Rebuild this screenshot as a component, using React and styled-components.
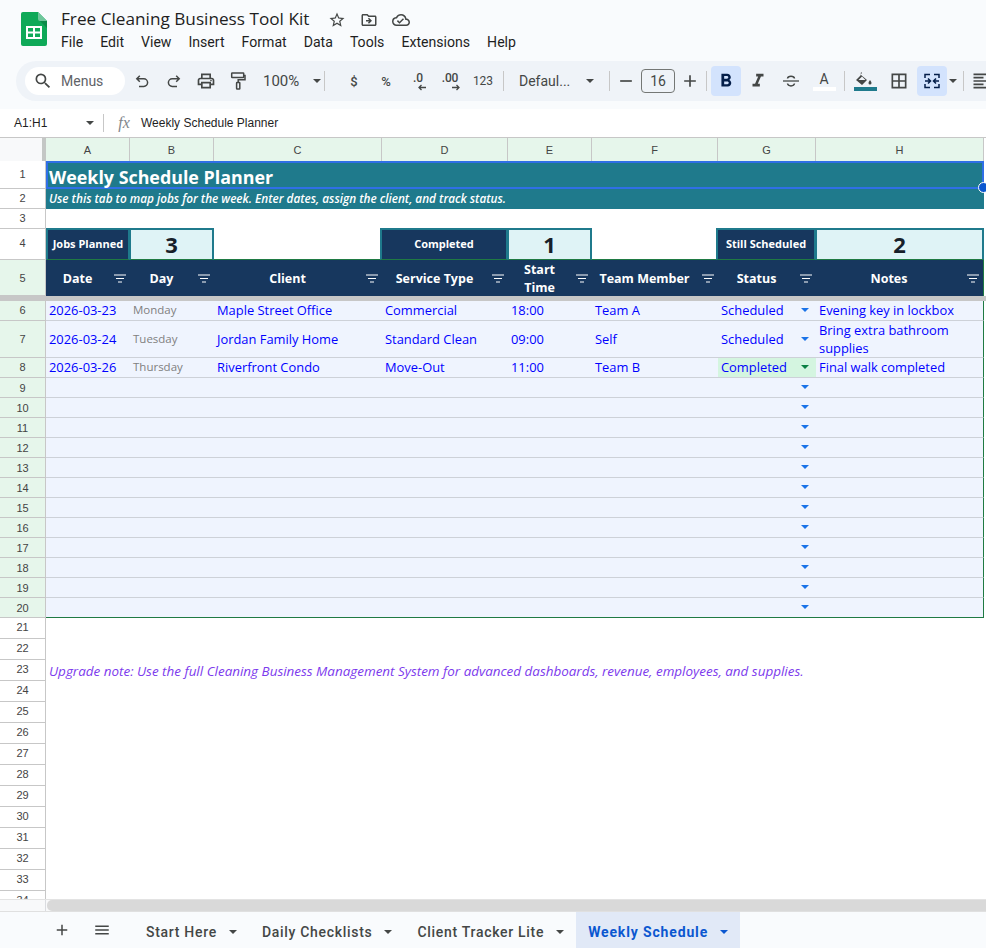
import React from "react";
import styled, { createGlobalStyle } from "styled-components";
import {
  MdStarBorder, MdOutlineDriveFileMove, MdOutlineCloudDone, MdSearch, MdOutlinePrint,
  MdAdd, MdRemove, MdFormatBold, MdFormatItalic, MdBorderAll,
  MdFormatAlignLeft, MdMenu,
} from "react-icons/md";

const Global = createGlobalStyle`
  html, body { margin: 0; padding: 0; background: #f9fbfd; }
  * { box-sizing: border-box; }
  body { font-family: Roboto, "Liberation Sans", sans-serif; color: #444746; }
`;

const Page = styled.div`
  width: 986px; height: 948px; display: flex; flex-direction: column; overflow: hidden; background: #f9fbfd;
`;
const TopBar = styled.header`
  height: 61px; display: flex; padding: 12px 0 0 21px; flex: none;
`;
const Logo = styled.svg`
  width: 26px; height: 34px; flex: none; margin-right: 14px;
`;
const TitleBlock = styled.div`display: flex; flex-direction: column;`;
const TitleRow = styled.div`display: flex; align-items: center; height: 15px;`;
const DocTitle = styled.div`
  font-family: "Open Sans", sans-serif; font-size: 17.2px; line-height: 14px; color: #1f1f1f; width: 260px; white-space: nowrap; padding-bottom: 2px; height: 16px;
`;
const TitleIcon = styled.span`
  width: 32px; display: flex; justify-content: center; color: #444746; font-size: 18px;
`;
const MenuBar = styled.nav`display: flex; margin-top: 7px;`;
const MenuItem = styled.span`
  font-size: 14.1px; line-height: 16px; color: #1f1f1f; margin-right: 17px;
`;
const Toolbar = styled.div`
  height: 40px; margin-left: 16px; border-radius: 20px 0 0 20px; background: #eff3f8; display: flex; align-items: center; flex: none; padding-left: 9px; width: 990px;
`;
const SearchPill = styled.div`
  width: 100px; height: 28px; margin-right: 1px; border-radius: 14px; background: #fff; display: flex; align-items: center; padding-left: 8px; gap: 8px; font-size: 14px; color: #5f6368; flex: none;
`;
const Tool = styled.div`
  width: ${p => p.$w || 32}px; height: 30px; flex: none; display: flex; align-items: center; justify-content: center; color: ${p => p.$on ? "#041e49" : "#444746"}; font-size: 20px; border-radius: 4px;
  background: ${p => p.$on ? "#d3e3fd" : "transparent"}; margin-left: ${p => p.$ml || 0}px;
`;
const Sep = styled.div`
  width: 1px; height: 20px; background: #c7c7c7; flex: none; margin-left: ${p => p.$ml || 0}px;
`;
const Drop = styled.i`
  display: block; width: 0; height: 0; flex: none; border-left: 4px solid transparent; border-right: 4px solid transparent; border-top: 4px solid ${p => p.$c || "#444746"};
`;
const StatusDrop = styled.span`margin-right: 4px; display: block;`;
const ZoomTool = styled.div`
  width: ${p => p.$w}px; height: 30px; flex: none; display: flex; align-items: center; justify-content: space-between; padding: 0 ${p => p.$pr}px 0 ${p => p.$pl}px; font-size: ${p => p.$fs || 14}px; color: #444746;
`;
const TextTool = styled(Tool)`font-size: ${p => p.$fs || 12}px; font-weight: ${p => p.$fw || 400}; font-family: Roboto, sans-serif;`;
const Deci = styled.span`position: relative; font-size: 12px; font-weight: 500; line-height: 12px; top: -3px; letter-spacing: -.2px;`;
const DeciArrow = styled.svg`position: absolute; right: -3px; top: 12px; width: 9px; height: 7px;`;
const SizeBox = styled.div`
  width: 34px; height: 24px; border: 1px solid #747775; border-radius: 4px; display: flex; align-items: center; justify-content: center; font-size: 14px; color: #444746; flex: none; margin: 0 -1px;
`;
const ColorTool = styled(Tool)`flex-direction: column; gap: 1px; font-size: 14px;`;
const Swatch = styled.span`display: block; width: 23px; height: 4px; background: ${p => p.$c}; flex: none;`;
const ColorA = styled.span`font-size: 14px; line-height: 14px;`;

const Formula = styled.div`
  height: 28px; margin-top: 8px; flex: none; background: #fff; display: flex; align-items: center; font-size: 12px; color: #1f1f1f; font-family: "Liberation Sans", sans-serif;
`;
const NameBox = styled.div`
  width: 103px; height: 100%; display: flex; align-items: center; justify-content: space-between; padding: 0 9px 0 14px; font-size: 12px; flex: none;
`;
const FxSep = styled.div`width: 1px; height: 18px; background: #c7c7c7; flex: none;`;
const Fx = styled.span`
  width: 37px; text-align: center; font-family: "Liberation Serif", serif; font-style: italic; font-size: 16px; color: #80868b; flex: none; padding-left: 3px;
`;

const Sheet = styled.div`flex: 1; min-height: 0; overflow: hidden; background: #fff; display: flex; flex-direction: column; position: relative;`;
const Row = styled.div`
  display: grid; grid-template-columns: 46px 84px 84px 168px 126px 84px 126px 98px 168px; grid-template-rows: minmax(0, 1fr); height: ${p => p.$h}px; flex: none;
`;
const ColHeadRow = styled(Row)`border-top: 1px solid #c7c7c7;`;
const Corner = styled.div`
  background: #f8f9fa; border-right: 4px solid #c4c7c5; width: 46px;
`;
const ColHead = styled.div`
  background: #e6f6eb; border-right: 1px solid #c7c7c7; display: flex; align-items: center; justify-content: center; font-size: 11px; color: #444; font-family: "Liberation Sans", sans-serif;
`;
const RowHead = styled.div`
  background: ${p => p.$sel ? "#e6f6eb" : "#fff"}; border-right: 1px solid #c7c7c7; border-bottom: 1px solid #c7c7c7; display: flex; align-items: center; justify-content: center; padding-bottom: ${p => p.$pb || 0}px; font-size: 11px; color: #444; font-family: "Liberation Sans", sans-serif; width: 46px; line-height: 12px;
`;
const Banner = styled.div`
  grid-column: span 8; background: #1f7a8c; color: #fff; display: flex; align-items: center; padding: ${p => p.$pt || 0}px 0 ${p => p.$pb || 0}px 3px; white-space: nowrap; font-family: "Open Sans", sans-serif; line-height: 18px;
  font-size: ${p => p.$fs}px; font-weight: ${p => p.$w || 400}; font-style: ${p => p.$i ? "italic" : "normal"}; position: relative;
  ${p => p.$selected && "border: 2px solid #2f6fe6; padding-left: 1px; z-index: 1;"}
`;
const Handle = styled.span`
  position: absolute; right: -7px; bottom: -6px; width: 11px; height: 11px; border-radius: 50%; background: #0b57d0; border: 1px solid #fff; z-index: 2;
`;
const Gap = styled.div`
  grid-column: span ${p => p.$n || 1}; background: #fff;
  ${p => p.$line && "border-bottom: 1px solid #1f7a43;"}
`;
const KpiLabel = styled.div`
  background: #17375e; color: #fff; border: 2px solid #1f7a8c; border-bottom: 1px solid #1f7a43; margin: -1px 0 0 ${p => p.$ml || 0}px; padding-bottom: 1px; display: flex; align-items: center; justify-content: center; font: 700 11px/16px "Open Sans", sans-serif; white-space: nowrap;
`;
const KpiValue = styled.div`
  background: #dff3f6; color: #17202a; border: 2px solid #1f7a8c; border-left-width: 1px; border-bottom: 1px solid #1f7a43; margin-top: -1px; padding-bottom: 1px; display: flex; align-items: center; justify-content: center; font: 700 22px/26px "Open Sans", sans-serif;
`;
const Head = styled.div`
  background: #17375e; color: #fff; display: flex; align-items: center; justify-content: center; text-align: center; position: relative; padding: 1px 21px 0 0; font: 700 12.5px/18px "Open Sans", sans-serif;
  ${p => p.$last && "border-right: 1px solid #1f7a43;"}
`;
const HeadLabel = styled.span`display: block; max-width: 60px; ${p => p.$wide && "max-width: none; white-space: nowrap;"}`;
const FilterIcon = styled.svg`
  position: absolute; right: 4px; top: 50%; margin-top: -4px; width: 12px; height: 9px;
`;
const Band = styled.div`height: 5px; background: #c7c7c7; flex: none; width: 986px;`;
const Cell = styled.div`
  background: ${p => p.$bg || "#eff4fe"}; border-bottom: 1px solid #cdd1d8; display: flex; align-items: center; justify-content: space-between; padding: 0 3px 1px; font: 400 ${p => p.$fs || 12.9}px/18px "Open Sans", sans-serif; color: ${p => p.$c || "#0000ff"}; overflow: hidden; white-space: ${p => p.$wrap ? "normal" : "nowrap"};
  ${p => p.$last && "border-right: 1px solid #1f7a43;"}
  ${p => p.$edge && "border-bottom: 1px solid #1f7a43;"}
`;
const Note = styled.div`
  grid-column: span 8; display: flex; align-items: center; padding: 1px 0 0 3px; font: italic 400 13.450px/18px "Open Sans", sans-serif; color: #7c3aed; white-space: nowrap; background: #fff;
`;
const ScrollRow = styled.div`
  height: 13px; flex: none; display: flex; background: #f8f9fa; border-top: 1px solid #e3e3e3; border-bottom: 1px solid #e0e0e0;
`;
const ScrollLeft = styled.div`width: 46px; border-right: 1px solid #dadce0; flex: none;`;
const Thumb = styled.div`flex: 1; margin-left: 1px; background: #d9d9d9; border-radius: 5px 0 0 5px;`;
const TabBar = styled.div`
  height: 36px; flex: none; display: flex; align-items: center; background: #f9fbfd; font: 500 14px Roboto, sans-serif;
`;
const TabIcon = styled.span`width: 40px; display: flex; justify-content: center; font-size: 18px; color: #444746; flex: none; margin-left: ${p => p.$ml || 0}px;`;
const Tab = styled.div`
  height: 100%; display: flex; align-items: center; gap: 12px; flex: none; margin-left: ${p => p.$ml || 0}px;
  padding: 3px 12px 0 ${p => p.$on ? 12 : 13}px;
  color: ${p => p.$on ? "#0b57d0" : "#444746"}; background: ${p => p.$on ? "#e1e9f7" : "transparent"};
  font-weight: ${p => p.$on ? 700 : 500}; letter-spacing: ${p => p.$on ? ".85px" : ".7px"};
`;

const D = ({ c }) => <Drop $c={c} />;
const Filter = () => (
  <FilterIcon viewBox="0 0 12 9"><path d="M0 1h12M2 4.500h8M4 8h4" stroke="#fff" strokeWidth="1" fill="none" /></FilterIcon>
);

const SheetsLogo = () => (
  <Logo viewBox="0 0 26 34">
    <path d="M2 0h15l9 9v23a2 2 0 0 1-2 2H2a2 2 0 0 1-2-2V2a2 2 0 0 1 2-2z" fill="#0fa958" />
    <path d="M17 7l9 9V9h-7z" fill="#0c8a48" />
    <path d="M17 0l9 9h-7a2 2 0 0 1-2-2z" fill="#6fc69b" />
    <path d="M6 14h16v13H6z M8 16v3.500h5V16z M15 16v3.500h5V16z M8 21.500V25h5v-3.500z M15 21.500V25h5v-3.500z" fill="#fff" fillRule="evenodd" transform="translate(-1 0)" />
  </Logo>
);

const UndoIcon = ({ flip }) => (
  <svg width="14" height="13" viewBox="0 0 14 13" style={flip ? { transform: "scaleX(-1)" } : undefined}>
    <path d="M4.800 .8 1.800 3.800l3 3M1.800 3.800h7a3.800 3.800 0 0 1 0 7.600H4" fill="none" stroke="#444746" strokeWidth="1.500" />
  </svg>
);
const RollerIcon = () => (
  <svg width="16" height="18" viewBox="0 0 16 18" fill="none" stroke="#444746" strokeWidth="1.500">
    <rect x="1.700" y="1" width="12" height="4.500" rx=".5" />
    <path d="M13.700 3.500h1.300v4.200H8.200v2.800" />
    <rect x="6.600" y="10.500" width="3.200" height="6.500" rx=".5" />
  </svg>
);
const StrikeIcon = () => (
  <svg width="18" height="18" viewBox="0 0 18 18">
    <path d="M1 9h16" stroke="#444746" strokeWidth="1.300" />
    <path d="M5.500 6.500C6 3.500 12 3.500 12.500 6.500M5.500 11.500C6 14.700 12 14.700 12.500 11.500" fill="none" stroke="#444746" strokeWidth="1.500" />
  </svg>
);
const FillIcon = () => (
  <svg width="18" height="14" viewBox="0 0 18 14">
    <path d="M6 0l1 1-1.500 1.500L12 8 7 13 1 8l4.500-4.500z M3.500 8h7L7 4.500z" fill="#444746" fillRule="evenodd" transform="translate(-1 0)" />
    <path d="M14 8c1 1.400 1.500 2.200 1.500 3a1.500 1.500 0 0 1-3 0c0-.8.500-1.600 1.500-3z" fill="#444746" />
  </svg>
);
const MergeIcon = () => (
  <svg width="16" height="16" viewBox="0 0 16 16" fill="none" stroke="#041e49" strokeWidth="1.500">
    <path d="M1 5V1.500h5M10 1.500h5V5M1 11v3.500h5M10 14.500h5V11" />
    <path d="M1 8h5.500M4 5.500 6.500 8 4 10.500M15 8H9.500M12 5.500 9.500 8l2.500 2.500" />
  </svg>
);

const columns = ["A", "B", "C", "D", "E", "F", "G", "H"];
const headers = ["Date", "Day", "Client", "Service Type", "Start Time", "Team Member", "Status", "Notes"];
const jobs = [
  { n: 6, h: 20, pb: 2, d: ["2026-03-23", "Monday", "Maple Street Office", "Commercial", "18:00", "Team A", "Scheduled", "Evening key in lockbox"] },
  { n: 7, h: 37, pb: 0, d: ["2026-03-24", "Tuesday", "Jordan Family Home", "Standard Clean", "09:00", "Self", "Scheduled", "Bring extra bathroom supplies"] },
  { n: 8, h: 20, pb: 2, d: ["2026-03-26", "Thursday", "Riverfront Condo", "Move-Out", "11:00", "Team B", "Completed", "Final walk completed"] },
];
const blanks = Array.from({ length: 12 }, (_, i) => i + 9);
const below = Array.from({ length: 14 }, (_, i) => i + 21);

function JobCell({ i, text, edge }) {
  if (i === 1) return <Cell $c="#7f7f7f" $fs={11.500} $edge={edge}>{text}</Cell>;
  if (i === 6) {
    const done = text === "Completed";
    return (
      <Cell $bg={done ? "#d4f5e0" : undefined} $edge={edge}>
        <span>{text}</span>
        <StatusDrop><D c={done ? "#0b8043" : "#1a73e8"} /></StatusDrop>
      </Cell>
    );
  }
  return <Cell $wrap={i === 7} $last={i === 7} $edge={edge}>{text}</Cell>;
}

export default function App() {
  return (
    <Page>
      <Global />
      <TopBar>
        <SheetsLogo />
        <TitleBlock>
          <TitleRow>
            <DocTitle>Free Cleaning Business Tool Kit</DocTitle>
            <TitleIcon><MdStarBorder /></TitleIcon>
            <TitleIcon><MdOutlineDriveFileMove /></TitleIcon>
            <TitleIcon><MdOutlineCloudDone /></TitleIcon>
          </TitleRow>
          <MenuBar>
            {["File", "Edit", "View", "Insert", "Format", "Data", "Tools", "Extensions", "Help"].map(m => <MenuItem key={m}>{m}</MenuItem>)}
          </MenuBar>
        </TitleBlock>
      </TopBar>

      <Toolbar>
        <SearchPill><MdSearch size={20} color="#444746" /><span>Menus</span></SearchPill>
        <Tool><UndoIcon /></Tool>
        <Tool><UndoIcon flip /></Tool>
        <Tool><MdOutlinePrint /></Tool>
        <Tool><RollerIcon /></Tool>
        <ZoomTool $w={70} $pl={9} $pr={3} $fs={15}><span>100%</span><D /></ZoomTool>
        <Sep />
        <TextTool $ml={13} $fw={500} $fs={13}>$</TextTool>
        <TextTool $fw={500} $fs={13}>%</TextTool>
        <Tool><Deci>.0<DeciArrow viewBox="0 0 9 7"><path d="M9 3.500H2M4.500 1 2 3.500 4.500 6" stroke="#444746" fill="none" strokeWidth="1.300" /></DeciArrow></Deci></Tool>
        <Tool><Deci>.00<DeciArrow viewBox="0 0 9 7"><path d="M0 3.500h7M4.500 1 7 3.500 4.500 6" stroke="#444746" fill="none" strokeWidth="1.300" /></DeciArrow></Deci></Tool>
        <TextTool $ml={1} $fs={12}>123</TextTool>
        <Sep $ml={4} />
        <ZoomTool $w={105} $pl={15} $pr={15}><span>Defaul...</span><D /></ZoomTool>
        <Sep />
        <Tool><MdRemove /></Tool>
        <SizeBox>16</SizeBox>
        <Tool><MdAdd /></Tool>
        <Sep />
        <Tool $w={30} $on $ml={4}><MdFormatBold size={22} /></Tool>
        <Tool $w={32} $ml={1}><MdFormatItalic size={22} /></Tool>
        <Tool $w={32} $ml={1}><StrikeIcon /></Tool>
        <ColorTool $w={32} $ml={1}><ColorA>A</ColorA><Swatch $c="#fff" /></ColorTool>
        <Sep $ml={4} />
        <ColorTool $w={32} $ml={4}><FillIcon /><Swatch $c="#1f7a8c" /></ColorTool>
        <Tool $w={32} $ml={2}><MdBorderAll /></Tool>
        <Tool $w={30} $on $ml={2}><MergeIcon /></Tool>
        <Tool $w={12}><D /></Tool>
        <Sep $ml={4} />
        <Tool $w={32} $ml={1}><MdFormatAlignLeft /></Tool>
      </Toolbar>

      <Formula>
        <NameBox><span>A1:H1</span><D /></NameBox>
        <FxSep />
        <Fx>fx</Fx>
        <span>Weekly Schedule Planner</span>
      </Formula>

      <Sheet>
        <ColHeadRow $h={24}>
          <Corner />
          {columns.map(c => <ColHead key={c}>{c}</ColHead>)}
        </ColHeadRow>
        <Row $h={28}>
          <RowHead $pb={2}>1</RowHead>
          <Banner $fs={17.850} $w={700} $pt={3} $selected>Weekly Schedule Planner<Handle /></Banner>
        </Row>
        <Row $h={20}>
          <RowHead $pb={2}>2</RowHead>
          <Banner $fs={11.750} $i $w={600} $pb={2}>Use this tab to map jobs for the week. Enter dates, assign the client, and track status.</Banner>
        </Row>
        <Row $h={20}><RowHead $pb={2}>3</RowHead><Gap $n={8} /></Row>
        <Row $h={31}>
          <RowHead $pb={3}>4</RowHead>
          <KpiLabel>Jobs Planned</KpiLabel><KpiValue>3</KpiValue>
          <Gap $line />
          <KpiLabel $ml={-2}>Completed</KpiLabel><KpiValue>1</KpiValue>
          <Gap $line />
          <KpiLabel $ml={-2}>Still Scheduled</KpiLabel><KpiValue>2</KpiValue>
        </Row>
        <Row $h={36}>
          <RowHead $sel>5</RowHead>
          {headers.map((h, i) => <Head key={h} $last={i === 7}><HeadLabel $wide={h !== "Start Time"}>{h}</HeadLabel><Filter /></Head>)}
        </Row>
        <Band />
        {jobs.map(j => (
          <Row key={j.n} $h={j.h}>
            <RowHead $sel $pb={j.pb}>{j.n}</RowHead>
            {j.d.map((t, i) => <JobCell key={i} i={i} text={t} />)}
          </Row>
        ))}
        {blanks.map(n => (
          <Row key={n} $h={20}>
            <RowHead $sel>{n}</RowHead>
            {columns.map((c, i) => (
              <JobCell key={c} i={i} text="" edge={n === 20} />
            ))}
          </Row>
        ))}
        {below.map(n => (
          <Row key={n} $h={21}>
            <RowHead $pb={2}>{n}</RowHead>
            {n === 23 ? <Note>Upgrade note: Use the full Cleaning Business Management System for advanced dashboards, revenue, employees, and supplies.</Note> : <Gap $n={8} />}
          </Row>
        ))}
      </Sheet>
      <ScrollRow><ScrollLeft /><Thumb /></ScrollRow>
      <TabBar>
        <TabIcon $ml={42}><MdAdd /></TabIcon>
        <TabIcon><MdMenu /></TabIcon>
        <Tab $ml={11}>Start Here<D /></Tab>
        <Tab>Daily Checklists<D /></Tab>
        <Tab>Client Tracker Lite<D /></Tab>
        <Tab $on>Weekly Schedule<D c="#0b57d0" /></Tab>
      </TabBar>
    </Page>
  );
}
